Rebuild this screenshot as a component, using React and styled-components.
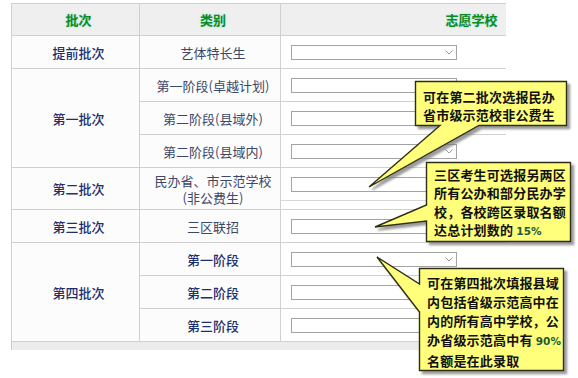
import React from 'react'
import styled, { createGlobalStyle } from 'styled-components'

const GlobalStyle = createGlobalStyle`
  html, body {
    margin: 0;
    padding: 0;
    background: #ffffff;
  }
  body {
    font-family: "Noto Sans CJK SC", "Noto Sans", sans-serif;
  }
`

const rows = [
  { batch: '提前批次', span: 1, kind: '艺体特长生' },
  { batch: '第一批次', span: 3, kind: '第一阶段(卓越计划)' },
  { kind: '第二阶段(县域外)' },
  { kind: '第二阶段(县域内)' },
  { batch: '第二批次', span: 1, kind: ['民办省、市示范学校', '(非公费生)'], tall: true },
  { batch: '第三批次', span: 1, kind: '三区联招' },
  { batch: '第四批次', span: 3, kind: '第一阶段', strong: true },
  { kind: '第二阶段', strong: true },
  { kind: '第三阶段', strong: true },
]

function App() {
  return (
    <>
      <GlobalStyle />
      <Page>
        <Scroller>
          <Table>
            <colgroup>
              <col style={{ width: 128 }} />
              <col style={{ width: 141 }} />
              <col style={{ width: 376 }} />
            </colgroup>
            <thead>
              <HeadRow>
                <Th>批次</Th>
                <Th>类别</Th>
                <Th>志愿学校</Th>
              </HeadRow>
            </thead>
            <tbody>
              {rows.map((r, i) => (
                <BodyRow key={i} $tall={r.tall}>
                  {r.batch && <BatchCell rowSpan={r.span}>{r.batch}</BatchCell>}
                  <KindCell $strong={r.strong}>
                    {Array.isArray(r.kind) ? r.kind.map((t) => <Line key={t}>{t}</Line>) : r.kind}
                  </KindCell>
                  <PickCell $tall={r.tall}>
                    {r.tall ? (
                      <TopSlot>
                        <SelectBox><Chevron /></SelectBox>
                      </TopSlot>
                    ) : (
                      <SelectBox><Chevron /></SelectBox>
                    )}
                  </PickCell>
                </BodyRow>
              ))}
            </tbody>
          </Table>
          <Track />
        </Scroller>

        <Bubbles width="578" height="378" viewBox="0 0 578 378">
          <defs>
            <filter id="shade" x="-10%" y="-10%" width="130%" height="130%">
              <feDropShadow dx="3" dy="3" stdDeviation="0.8" floodColor="#7a7a7a" floodOpacity="0.75" />
            </filter>
          </defs>
          <path d="M415.5 81.5 H566.5 V125.5 H479 L369 187 L440 125.5 H415.5 Z" />
          <path d="M426.5 162.5 H570.5 V241.5 H426.5 V221 L375 227 L426.5 205 Z" />
          <path d="M419.5 268.5 H563.5 V370.5 H419.5 V312 L377 257 L419.5 284 Z" />
        </Bubbles>

        <Note $x={415} $y={81} $w={152} $top={7} $lh={18}>
          可在第二批次选报民办<br />省市级示范校非公费生
        </Note>
        <Note $x={426} $y={162} $w={145} $top={4} $lh={18.4}>
          三区考生可选报另两区<br />所有公办和部分民办学<br />校，各校跨区录取名额<br />达总计划数的 <Pct>15%</Pct>
        </Note>
        <Note $x={419} $y={268} $w={145} $top={5} $lh={19}>
          可在第四批次填报县域<br />内包括省级示范高中在<br />内的所有高中学校，公<br />办省级示范高中有 <Pct>90%</Pct><br />名额是在此录取
        </Note>
      </Page>
    </>
  )
}

function Chevron() {
  return (
    <svg width="8" height="5" viewBox="0 0 8 5">
      <polyline points="0.5,0.5 4,4 7.5,0.5" fill="none" stroke="#9a9a9a" strokeWidth="1" />
    </svg>
  )
}

const Page = styled.div`
  position: relative;
  width: 578px;
  height: 378px;
  padding: 3px 0 0 11px;
  box-sizing: border-box;
  overflow: hidden;
`

const Scroller = styled.div`
  width: 495px;
  overflow: hidden;
  background: #fcfcfc;
`

const Table = styled.table`
  border-collapse: collapse;
  table-layout: fixed;
  width: 646px;
  font-size: 13px;
`

const HeadRow = styled.tr`
  height: 32px;
  background: #efefef;
`

const Th = styled.th`
  border: 1px solid #d0d0d0;
  padding: 0 0 0 6px;
  font-size: 13px;
  font-weight: 700;
  color: #0f8a1e;
  text-shadow: 0 0 2px rgba(60, 220, 200, 0.55);
  text-align: center;
`

const BodyRow = styled.tr`
  height: ${(p) => (p.$tall ? 42 : 33)}px;
`

const BatchCell = styled.td`
  border: 1px solid #d0d0d0;
  padding: 0 0 0 6px;
  text-align: center;
  color: #1d2f6f;
  font-weight: 500;
`

const KindCell = styled.td`
  border: 1px solid #d0d0d0;
  padding: 0 0 0 6px;
  text-align: center;
  color: ${(p) => (p.$strong ? '#1d2f6f' : '#3d4868')};
  font-weight: ${(p) => (p.$strong ? 500 : 400)};
`

const Line = styled.div`
  line-height: 17px;
`

const PickCell = styled.td`
  border: 1px solid #d0d0d0;
  padding: 0 0 0 ${(p) => (p.$tall ? 0 : 10)}px;
  vertical-align: ${(p) => (p.$tall ? 'top' : 'middle')};
  background: #ffffff;
`

const TopSlot = styled.div`
  height: 32px;
  display: flex;
  align-items: center;
  padding-left: 10px;
  border-bottom: 1px solid #d8d8d8;
`

const SelectBox = styled.div`
  width: 166px;
  height: 15px;
  box-sizing: border-box;
  border: 1px solid #a3a3a3;
  background: #ffffff;
  display: flex;
  align-items: center;
  justify-content: flex-end;
  padding-right: 3px;
`

const Track = styled.div`
  height: 8px;
  background: #ececec;
  border-left: 1px solid #cccccc;
`

const Bubbles = styled.svg`
  position: absolute;
  left: 0;
  top: 0;
  pointer-events: none;

  path {
    fill: #ffff7c;
    stroke: #2e2e12;
    stroke-width: 1.4;
    filter: url(#shade);
  }
`

const Note = styled.div`
  position: absolute;
  left: ${(p) => p.$x}px;
  top: ${(p) => p.$y}px;
  width: ${(p) => p.$w}px;
  box-sizing: border-box;
  padding: ${(p) => p.$top}px 0 0 8px;
  font-size: 13px;
  font-weight: 700;
  line-height: ${(p) => p.$lh}px;
  letter-spacing: 0.2px;
  color: #111111;
  white-space: nowrap;
`

const Pct = styled.span`
  font-family: "DejaVu Sans", sans-serif;
  font-size: 10.5px;
  font-weight: 700;
  letter-spacing: 0;
  color: #1d5b33;
`

export default App
